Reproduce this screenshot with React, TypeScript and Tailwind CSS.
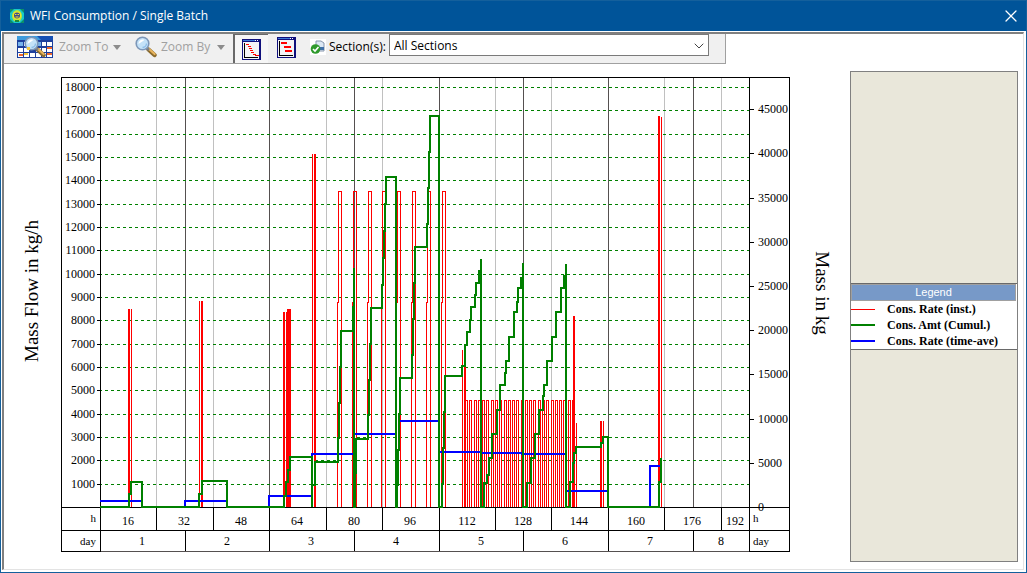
import React, { useState } from "react";
import { ChevronDown, X } from "lucide-react";

const PLOT = { left: 100, right: 749, top: 77, bottom: 507 };
const HOUR_LINES = [100, 156, 213, 269, 326, 382, 439, 495, 551, 608, 664, 721, 749];
const DAY_LINES = [100, 185, 269, 354, 439, 523, 608, 693, 749];

const LEGEND = [
  { label: "Cons. Rate (inst.)", line: "h-px w-6 bg-[#ff0000]" },
  { label: "Cons. Amt (Cumul.)", line: "h-0.5 w-6 bg-[#008000]" },
  { label: "Cons. Rate (time-ave)", line: "h-0.5 w-6 bg-[#0000ff]" },
];

// Short draws: [x, top, width]
const SPIKES = [
  [128, 309, 2], [131, 309, 1],
  [199, 301, 1], [201, 301, 2],
  [283, 312, 2], [286, 312, 1], [287, 309, 4],
  [312, 154, 1], [314, 154, 2],
  [462, 350, 1], [464, 350, 2],
  [573, 316, 2], [576, 423, 1],
  [600, 421, 2], [603, 421, 1],
  [658, 116, 2], [661, 117, 1],
];

// Left edges of the tall two-step pulses
const TALL_PULSES = [337, 352, 367, 381, 396, 411, 426, 441];

const CIP_PULSES = Array.from({ length: 26 }, (_, i) => Math.round(465 + i * 4.28));

const CUMULATIVE =
  "M100 507H129V494H131V482H142V507H199V494H202V481H227V507H284V496H286V482H288V470H290V457H312V507" +
  "V485H315V462H338V438H339V403H340V367H341V331H353V307H354V268V507" +
  "H355V473H356V439H368V415H369V380H370V344H371V308H382V285H383V258H384V231H385V204H386V177H396V507" +
  "H397V485H398V450H399V414H400V378H412V355H413V319H414V283H415V247H427V224H428V188H429V152H430V116H439V507" +
  "H442V484H443V448H444V412H445V376H462V366H465V345H467V332H470V320H471V307H475V295H476V283H479V271H481V259V507" +
  "H484V483H487V475H489V458H492V434H497V410H500V385H505V373H506V361H509V337H514V312H517V302H518V288H521V278H523V263V507" +
  "H527V483H531V458H535V434H539V410H543V396H544V385H547V361H552V337H556V312H561V288H564V276H566V264V507" +
  "H570V482H573V463H574V453H576V447H601V443H603V437H608V507H659V482H661V458";

const AVERAGE =
  "M100 501H142M185 507V501H227M269 507V496H312V454H353M355 434H395M398 421H438" +
  "M440 452H481V453H522V454H565M567 491H607M650 507V466H660";

function AppIcon() {
  return (
    <svg width="14" height="14" viewBox="0 0 14 14" aria-hidden="true">
      <rect width="14" height="14" fill="#18c8c8" />
      <path d="M0 0h4L0 4zM14 0v4l-4-4zM0 14v-4l4 4zM14 14h-4l4-4z" fill="#0b8f6a" />
      <ellipse cx="7" cy="7" rx="5" ry="6" fill="#b8e838" />
      <circle cx="7" cy="6.5" r="4" fill="#f3e52c" />
      <circle cx="7" cy="6.5" r="3" fill="#3d4c8c" />
      <path d="M5 5h1.5v1H5zM7.5 5H9v1H7.5zM5.5 7.5h3v1h-3z" fill="#f3e52c" />
      <path d="M5 11h4v2H5z" fill="#1c8a3c" />
    </svg>
  );
}

function Magnifier() {
  return (
    <g>
      <path d="M13.5 13.5l6 5.5" stroke="#8a6a2c" strokeWidth="4.4" strokeLinecap="round" />
      <path d="M14 13l5.6 5" stroke="#e8b45c" strokeWidth="2.2" strokeLinecap="round" />
      <path d="M11.5 12l2.5 2" stroke="#777c86" strokeWidth="2.4" />
      <circle cx="7.5" cy="7.5" r="6.3" fill="#c4e2f8" stroke="#7d97b8" strokeWidth="1.6" />
      <path d="M3.5 8a4.4 4.4 0 0 1 4.6-4.6c1.8 0 .6 1.4-.8 2S4.6 7 3.5 8z" fill="#fff" />
      <path d="M11.5 7.5a4 4 0 0 1-4 4" fill="none" stroke="#8dbde8" strokeWidth="1.4" />
    </g>
  );
}

function ZoomToIcon() {
  return (
    <svg width="36" height="22" viewBox="0 0 36 22" aria-hidden="true">
      <rect width="36" height="22" fill="#1d3f9c" />
      <rect width="36" height="4" fill="#3d9bdc" />
      <path d="M20 0h16v4H24z" fill="#1450b4" />
      <g fill="#fff">
        <path d="M1 6h5v4H1zM7 6h5v4H7zM19 6h5v4h-5zM25 6h4v4h-4zM30 6h5v4h-5z" />
        <path d="M1 12h5v4H1zM7 12h5v4H7zM19 12h5v4h-5zM25 12h4v4h-4zM30 12h5v4h-5z" />
        <path d="M1 17h5v4H1zM7 17h5v4H7zM13 17h5v4h-5zM19 17h5v4h-5zM25 17h4v4h-4zM30 17h5v4h-5z" />
      </g>
      <path d="M1 6h5v4H1zM19 6h5v4h-5z" fill="#78b4ec" />
      <path d="M2 18h4v2H2zM30 11h5v2h-5zM30 17h5v2h-5z" fill="#f0682c" />
      <path d="M7 17h4v2H7z" fill="#f8c83c" />
      <g transform="translate(7 0)">
        <Magnifier />
      </g>
      <path d="M10 11h3v3h-3z" fill="#f8c83c" />
    </svg>
  );
}

function ChartIcon({ bars }: { bars: string }) {
  return (
    <svg width="19" height="21" viewBox="0 0 19 21" shapeRendering="crispEdges" aria-hidden="true">
      <rect width="19" height="21" fill="#10107c" />
      <rect x="1" y="3" width="16" height="17" fill="#f4f4f6" />
      <rect x="1" y="1" width="12" height="1" fill="#3c78d8" />
      <path d="M13 1h1v1h-1zM15 1h1v1h-1z" fill="#fff" />
      <path d="M2.5 4v15M2 18.5h14" stroke="#000" fill="none" />
      <path d={bars} fill="#ff0000" />
    </svg>
  );
}

function SectionsIcon() {
  return (
    <svg width="16" height="16" viewBox="0 0 16 16" aria-hidden="true">
      <rect width="16" height="16" fill="#fff" />
      <path d="M6 2h5l3 2v8H6z" fill="#dbe7f4" stroke="#8796ac" />
      <path d="M8 8h6v3H8z" fill="#3f6fa8" />
      <circle cx="5.5" cy="10" r="4.8" fill="#2f9a2c" />
      <path d="M3 10l2 2 3.5-4" stroke="#fff" strokeWidth="1.6" fill="none" />
    </svg>
  );
}

function DropArrow() {
  return (
    <svg width="8" height="5" viewBox="0 0 8 5" aria-hidden="true">
      <path d="M0 0h8L4 5z" fill="#8c8c8c" />
    </svg>
  );
}

function Toolbar() {
  const [view, setView] = useState("stepped");
  const [section, setSection] = useState("All Sections");

  return (
    <div className="flex h-[30px] w-fit max-w-full items-start border-r border-b border-[#a0a0a0] bg-[#f0f0f0] pl-[13px] pr-4">
      <button className="mt-px flex h-6 items-center text-[#a0a0a0]">
        <ZoomToIcon />
        <span className="ml-1.5 mr-1.5 w-12 text-left whitespace-nowrap">Zoom To</span>
        <DropArrow />
      </button>
      <button className="mt-px ml-3.5 flex h-6 items-center text-[#a0a0a0]">
        <svg width="22" height="22" viewBox="0 0 22 22" aria-hidden="true">
          <Magnifier />
        </svg>
        <span className="ml-1 mr-2 w-12 text-left whitespace-nowrap">Zoom By</span>
        <DropArrow />
      </button>
      <button
        aria-label="Stepped chart"
        aria-pressed={view === "stepped"}
        onClick={() => setView("stepped")}
        className="ml-2 flex h-[29px] w-[35px] items-center justify-center border-t border-l-2 border-[#696969] bg-[#f6f6f6]"
      >
        <ChartIcon bars="M4 5h3v1H4zM6 7h3v1H6zM7 9h3v1H7zM8 11h3v1H8zM9 13h3v1H9zM11 15h3v1h-3zM13 16h4v1h-4z" />
      </button>
      <button
        aria-label="Bar chart"
        aria-pressed={view === "bar"}
        onClick={() => setView("bar")}
        className="ml-2 mt-px flex h-6 w-5 items-center justify-center"
      >
        <ChartIcon bars="M4 5h6v2H4zM7 9h7v2H7zM8 13h7v2H8z" />
      </button>
      <div className="ml-3.5 mt-px flex h-6 items-center">
        <SectionsIcon />
        <label htmlFor="sections" className="ml-[3px] w-[60px] whitespace-nowrap">
          Section(s):
        </label>
      </div>
      <div className="relative">
        <select
          id="sections"
          value={section}
          onChange={(e) => setSection(e.target.value)}
          className="block h-[22px] w-80 appearance-none rounded-none border border-[#7a7a7a] bg-white pt-0.5 pl-1 outline-none"
        >
          <option>All Sections</option>
        </select>
        <ChevronDown className="pointer-events-none absolute top-1 right-0.5 h-4 w-4 text-[#444444]" strokeWidth={1.5} />
      </div>
    </div>
  );
}

function ConsumptionChart() {
  return (
    <svg viewBox="4 64 846 492" className="block h-auto w-full" role="img" aria-label="WFI consumption">
      <g shapeRendering="crispEdges" fill="none">
        {HOUR_LINES.slice(1, -1).map((x) => (
          <path key={x} d={`M${x + 0.5} ${PLOT.top}V${PLOT.bottom}`} stroke="#c0c0c0" />
        ))}
        {DAY_LINES.slice(1, -1).map((x) => (
          <path key={x} d={`M${x + 0.5} ${PLOT.top}V${PLOT.bottom}`} stroke="#555050" />
        ))}
        {Array.from({ length: 18 }, (_, i) => Math.round(PLOT.bottom - (i + 1) * 23.333)).map((y) => (
          <g key={y}>
            <path d={`M${PLOT.left} ${y + 0.5}H${PLOT.right}`} stroke="#008000" strokeDasharray="3 3" strokeDashoffset="1" />
            <path d={`M97 ${y + 0.5}H101`} stroke="#000" />
          </g>
        ))}

        <g fill="#ff0000">
          {SPIKES.map(([x, top, width]) => (
            <rect key={x} x={x} y={top} width={width} height={PLOT.bottom - top} />
          ))}
        </g>
        <g stroke="#ff0000">
          {TALL_PULSES.map((x) => (
            <path key={x} d={`M${x + 0.5} 507V302.5H${x + 1.5}V191.5H${x + 4.5}V507`} />
          ))}
          {CIP_PULSES.map((x) => (
            <path key={x} d={`M${x + 0.5} 507V400.5H${x + 2.5}V507`} />
          ))}
        </g>

        {/* frame and time scale */}
        <g stroke="#000">
          <path d="M61.5 77V552M61 77.5H790M789.5 77V552M100.5 77V552M749.5 77V552" />
          <path d="M61 507.5H790M61 530.5H790M61 551.5H790" />
          {HOUR_LINES.map((x) => (
            <path key={x} d={`M${x + 0.5} 507V530`} />
          ))}
          {DAY_LINES.map((x) => (
            <path key={x} d={`M${x + 0.5} 530V551`} />
          ))}
          {Array.from({ length: 9 }, (_, i) => Math.round(PLOT.bottom - (i + 1) * 44.2)).map((y) => (
            <path key={y} d={`M750 ${y + 0.5}H754`} />
          ))}
        </g>
        <path d="M101 551.5H749" stroke="#555050" />

        <path d={AVERAGE} stroke="#0000ff" strokeWidth="2" />
        <path d={CUMULATIVE} stroke="#008000" strokeWidth="2" />
      </g>

      <g fill="#000" className="font-['Liberation_Serif',serif] text-[12px]">
        <g textAnchor="end">
          {Array.from({ length: 18 }, (_, i) => i + 1).map((n) => (
            <text key={n} x="95" y={Math.round(PLOT.bottom - n * 23.333) + 4}>
              {n * 1000}
            </text>
          ))}
        </g>
        {Array.from({ length: 10 }, (_, i) => i).map((n) => (
          <text key={n} x="758" y={Math.round(PLOT.bottom - n * 44.2) + 4}>
            {n * 5000}
          </text>
        ))}
        <g textAnchor="middle">
          {HOUR_LINES.slice(1).map((x, i) => (
            <text key={x} x={Math.floor((HOUR_LINES[i] + x) / 2)} y="525">
              {(i + 1) * 16}
            </text>
          ))}
          {DAY_LINES.slice(1).map((x, i) => (
            <text key={x} x={Math.floor((DAY_LINES[i] + x) / 2)} y="545">
              {i + 1}
            </text>
          ))}
        </g>
        <g className="text-[11px]">
          <text x="96" y="522" textAnchor="end">h</text>
          <text x="96" y="545" textAnchor="end">day</text>
          <text x="753" y="522">h</text>
          <text x="753" y="545">day</text>
        </g>
        <g className="text-[19px]" textAnchor="middle">
          <text transform="translate(38 291) rotate(-90)">Mass Flow in kg/h</text>
          <text transform="translate(816 293) rotate(90)">Mass in kg</text>
        </g>
      </g>
    </svg>
  );
}

function Legend() {
  return (
    <aside className="mt-[7px] mr-[5px] mb-[7px] flex w-[168px] shrink-0 flex-col justify-center border border-[#808080] bg-[#e9e7da]">
      <section className="border-y border-[#696969] bg-white">
        <h2 className="mr-px border border-[#a0a0a0] bg-[#7799c8] text-center font-['Liberation_Sans',sans-serif] text-[11px] leading-[15px] text-white">
          Legend
        </h2>
        <ul className="font-['Liberation_Serif',serif] text-[12px] leading-4 font-bold">
          {LEGEND.map((item) => (
            <li key={item.label} className="flex h-4 items-center whitespace-nowrap">
              <span className={item.line} />
              <span className="ml-3">{item.label}</span>
            </li>
          ))}
        </ul>
      </section>
    </aside>
  );
}

export default function App() {
  return (
    <div className="flex min-h-screen flex-col border border-[#14609c] bg-white font-['Open_Sans','Noto_Sans',sans-serif] text-[12px] text-black">
      <header className="flex h-[30px] items-center bg-[#005499] pl-[9px] pr-[5px] text-white">
        <AppIcon />
        <h1 className="ml-1.5 flex-1">WFI Consumption / Single Batch</h1>
        <button aria-label="Close">
          <X className="h-5 w-5" strokeWidth={1.5} />
        </button>
      </header>
      <div className="flex flex-1 flex-col pt-px pr-0.5 pb-0.5 pl-px">
        <div className="flex flex-1 flex-col border-t-2 border-r border-b border-l-2 border-t-[#808080] border-r-[#e3e3e3] border-b-[#e3e3e3] border-l-[#808080]">
          <Toolbar />
          <main className="flex flex-1">
            <div className="min-w-0 flex-1">
              <ConsumptionChart />
            </div>
            <Legend />
          </main>
        </div>
      </div>
    </div>
  );
}
